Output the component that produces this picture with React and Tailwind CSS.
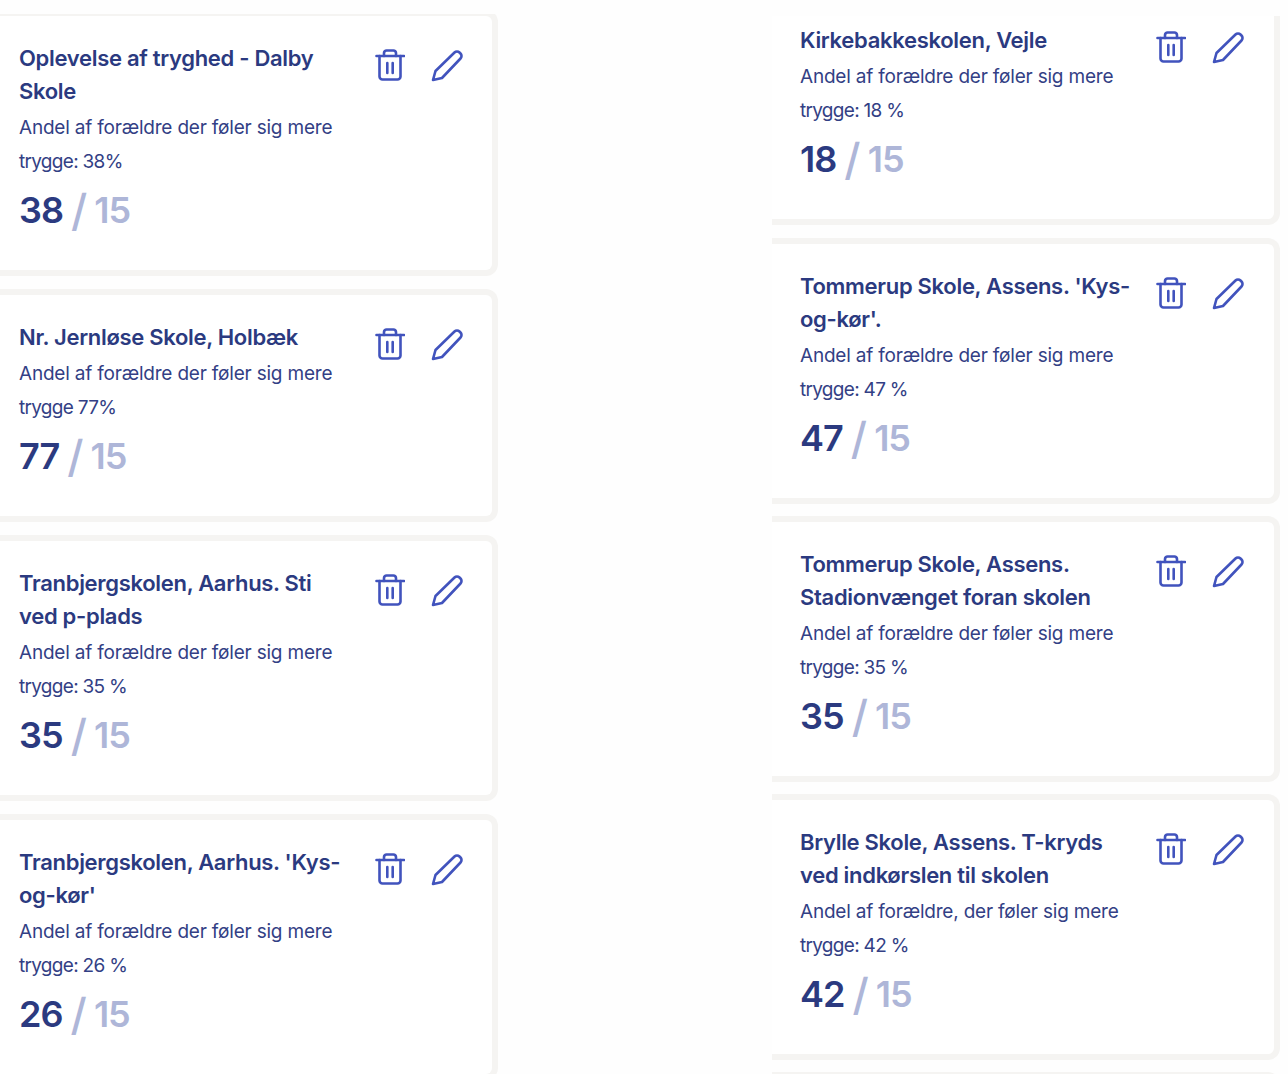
import React from "react";

const leftCards = [
  { title: "Oplevelse af tryghed - Dalby\nSkole", text: "Andel af forældre der føler sig mere", text2: "trygge: 38%", value: 38 },
  { title: "Nr. Jernløse Skole, Holbæk", text: "Andel af forældre der føler sig mere", text2: "trygge 77%", value: 77 },
  { title: "Tranbjergskolen, Aarhus. Sti\nved p-plads", text: "Andel af forældre der føler sig mere", text2: "trygge: 35 %", value: 35 },
  { title: "Tranbjergskolen, Aarhus. 'Kys-\nog-kør'", text: "Andel af forældre der føler sig mere", text2: "trygge: 26 %", value: 26 },
];

const rightCards = [
  { title: "Kirkebakkeskolen, Vejle", text: "Andel af forældre der føler sig mere", text2: "trygge: 18 %", value: 18 },
  { title: "Tommerup Skole, Assens. 'Kys-\nog-kør'.", text: "Andel af forældre der føler sig mere", text2: "trygge: 47 %", value: 47 },
  { title: "Tommerup Skole, Assens.\nStadionvænget foran skolen", text: "Andel af forældre der føler sig mere", text2: "trygge: 35 %", value: 35 },
  { title: "Brylle Skole, Assens. T-kryds\nved indkørslen til skolen", text: "Andel af forældre, der føler sig mere", text2: "trygge: 42 %", value: 42 },
];

function TrashIcon() {
  return (
    <svg width="30" height="32" viewBox="0 0 30 32" fill="none" stroke="#4153bd" strokeWidth="2.6" strokeLinecap="round" strokeLinejoin="round">
      <path d="M1.5 7H29" />
      <path d="M9 7V4a2.5 2.5 0 0 1 2.5-2.5h7A2.5 2.5 0 0 1 21 4v3" />
      <path d="M4.5 7v20.5a3 3 0 0 0 3 3h15a3 3 0 0 0 3-3V7" />
      <path d="M12.3 14v10M17.7 14v10" />
    </svg>
  );
}

function PencilIcon() {
  return (
    <svg width="34" height="33" viewBox="0 0 34 33" fill="none" stroke="#4153bd" strokeWidth="2.6" strokeLinecap="round" strokeLinejoin="round">
      <path d="M2 31l2.5-9L23.5 3.5a3.6 3.6 0 0 1 5 0l1 1a3.6 3.6 0 0 1 0 5L11 29z" />
    </svg>
  );
}

function Card({ card, className }) {
  return (
    <div className={"border-[6px] border-l-0 border-[#f5f4f2] rounded-r-xl bg-white pt-[26px] pb-[40px] " + className}>
      <div className="flex">
        <div className="w-[356px] shrink-0">
          <h3 className="whitespace-pre-line text-[22px] leading-[33px] font-semibold text-[#2b3a80] tracking-[-0.3px]">{card.title}</h3>
          <p className="mt-[3px] text-[19px] leading-[34px] text-[#333f85] tracking-[-0.2px]">
            {card.text}
            <br />
            <span className="tracking-[-0.7px]">{card.text2}</span>
          </p>
          <div className="mt-[11px] text-[36px] leading-[40px] font-semibold text-[#2b3a80] tracking-[-1px]">
            {card.value}{" "}
            <span className="text-[#aeb6d8]">
              <span className="text-[44px] leading-[0] align-[-3px] font-medium">/</span> 15
            </span>
          </div>
        </div>
        <div className="mt-[7px] flex items-start gap-[26px]">
          <TrashIcon />
          <PencilIcon />
        </div>
      </div>
    </div>
  );
}

export default function App() {
  return (
    <div className="relative h-[1074px] w-[1288px] overflow-hidden bg-[#fefefe] font-['Inter',sans-serif]">
      {/* the shot is cropped at the top, so a strip covers the first cards */}
      <div className="absolute left-0 top-0 z-10 h-[14px] w-[760px] bg-[#fefefe]" />
      <div className="absolute right-0 top-0 z-10 h-4 w-[528px] bg-[#fefefe]" />

      <div className="flex items-start">
        <div className="mt-[10px] flex w-[498px] flex-col gap-[13px]">
          {leftCards.map((card) => (
            <Card key={card.title} card={card} className="pl-[19px]" />
          ))}
        </div>
        <div className="-mt-2 ml-[274px] flex w-[508px] flex-col gap-[12px]">
          {rightCards.map((card, i) => (
            <Card key={card.title} card={card} className={i === 0 ? "mb-px pl-[28px]" : "pl-[28px]"} />
          ))}
          <div className="h-10 rounded-r-xl border-[6px] border-l-0 border-[#f5f4f2] bg-white" />
        </div>
      </div>
    </div>
  );
}
